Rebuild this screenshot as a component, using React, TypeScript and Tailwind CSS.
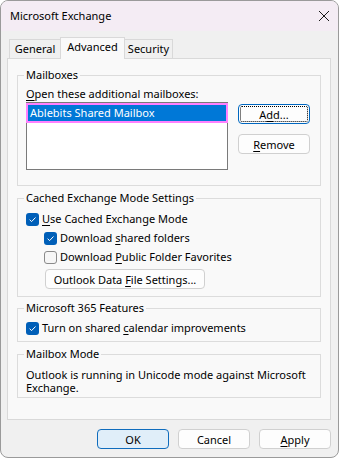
import React from 'react';

function U({ children }: { children: React.ReactNode }) {
	return <span className="underline decoration-1 underline-offset-2">{children}</span>;
}

function Check({ checked }: { checked: boolean }) {
	if (!checked) {
		return <span className="h-[13px] w-[13px] shrink-0 rounded-[3px] border border-[#8a8a8a] bg-[#f6f6f6]" />;
	}
	return (
		<span className="flex h-[13px] w-[13px] shrink-0 items-center justify-center rounded-[3px] bg-[#005fb8]">
			<svg width="9" height="9" viewBox="0 0 9 9">
				<path d="M1.6 4.7 L3.6 6.6 L7.5 2.5" fill="none" stroke="white" strokeWidth="1" />
			</svg>
		</span>
	);
}

interface GroupProps {
	title: string;
	className: string;
	children: React.ReactNode;
}
function Group({ title, className, children }: GroupProps) {
	return (
		<fieldset className={'border border-[#dcdcdc] ' + className}>
			<legend className="-ml-[2px] px-[2px] leading-[16px]">{title}</legend>
			{children}
		</fieldset>
	);
}

function Btn({
	children,
	className = '',
}: {
	children: React.ReactNode;
	className?: string;
}) {
	return (
		<button
			className={
				'flex h-[20px] w-[72px] items-center justify-center rounded-[4px] border leading-none ' +
				className
			}
		>
			<span>{children}</span>
		</button>
	);
}

export default function App() {
	return (
		<div className="h-[459px] w-[340px] bg-white font-['Noto_Sans',sans-serif] text-[11px] text-black">
			<div className="flex h-[458px] w-[339px] flex-col overflow-hidden rounded-[8px] border border-[#9a9a9a] bg-[#f0f0f0]">
				{/* title bar */}
				<div className="flex h-[30px] shrink-0 items-center justify-between bg-[#f4ecf4] pl-[9px] pr-[8px]">
					<span>Microsoft Exchange</span>
					<svg width="12" height="12" viewBox="0 0 12 12">
						<path d="M1 1 L11 11 M11 1 L1 11" stroke="#1a1a1a" strokeWidth="1" />
					</svg>
				</div>

				<div className="flex flex-col pl-[6px] pr-[7px]">
					{/* tabs */}
					<div className="mt-[6px] flex h-[21px] items-end pl-[2px]">
						<div className="flex h-[19px] w-[52px] items-center justify-center border border-b-0 border-[#d9d9d9] pt-[1px]">
							General
						</div>
						<div className="relative z-10 -mb-px -ml-px flex h-[22px] w-[65px] items-center justify-center border border-b-0 border-[#d9d9d9] bg-[#f9f9f9] pb-[2px]">
							Advanced
						</div>
						<div className="-ml-px flex h-[19px] w-[49px] items-center justify-center border border-b-0 border-[#d9d9d9] pt-[1px]">
							Security
						</div>
					</div>

					{/* tab panel */}
					<div className="flex flex-col border border-[#d9d9d9] bg-[#f9f9f9] px-[9px] pb-[21px] pt-[8px]">
						<Group title="Mailboxes" className="pb-[15px] pl-[8px] pr-[10px] pt-[3px]">
							<div className="leading-[15px]">
								<U>O</U>pen these additional mailboxes:
							</div>
							<div className="mt-[1px] flex">
								<div className="h-[68px] w-[202px] border border-[#7a7a7a] bg-white">
									<div className="-mx-px flex h-[20px] items-center border-2 border-[#ff80ff] bg-[#0078d7] pl-[2px] text-white">
										Ablebits Shared Mailbox
									</div>
								</div>
								<div className="ml-[10px] flex flex-col gap-[10px] pt-[2px]">
									<Btn className="border-[#0067c0] bg-[#fdfdfd] outline-1 outline-offset-[-3px] outline-black outline-dotted">
										A<U>d</U>d...
									</Btn>
									<Btn className="border-[#d0d0d0] bg-[#fdfdfd]">
										<U>R</U>emove
									</Btn>
								</div>
							</div>
						</Group>

						<Group title="Cached Exchange Mode Settings" className="mt-[4px] pb-[7px] pl-[8px] pr-[10px] pt-[4px]">
							<div className="flex h-[19px] items-center gap-[3px]">
								<Check checked />
								<span>
									<U>U</U>se Cached Exchange Mode
								</span>
							</div>
							<div className="flex h-[19px] items-center gap-[3px] pl-[18px]">
								<Check checked />
								<span>
									Download <U>s</U>hared folders
								</span>
							</div>
							<div className="flex h-[19px] items-center gap-[3px] pl-[18px]">
								<Check checked={false} />
								<span>
									Download <U>P</U>ublic Folder Favorites
								</span>
							</div>
							<div className="ml-[19px] mt-[2px]">
								<Btn className="w-[160px] border-[#d0d0d0] bg-[#fdfdfd]">
									Outlook Data <U>F</U>ile Settings...
								</Btn>
							</div>
						</Group>

						<Group title="Microsoft 365 Features" className="mt-[3px] pb-[3px] pl-[8px] pr-[10px] pt-[3px]">
							<div className="flex h-[19px] items-center gap-[3px]">
								<Check checked />
								<span>
									Turn on shared <U>c</U>alendar improvements
								</span>
							</div>
						</Group>

						<Group title="Mailbox Mode" className="mt-[4px] pb-[3px] pl-[8px] pr-[6px] pt-[6px]">
							<p className="leading-[13px]">
								Outlook is running in Unicode mode against Microsoft Exchange.
							</p>
						</Group>
					</div>

					{/* dialog buttons */}
					<div className="mt-[9px] flex justify-end gap-[9px]">
						<Btn className="border-[#0f6cbd] bg-[#e0eef9]">OK</Btn>
						<Btn className="border-[#d0d0d0] bg-[#fdfdfd]">Cancel</Btn>
						<Btn className="border-[#d0d0d0] bg-[#fdfdfd]">
							<U>A</U>pply
						</Btn>
					</div>
				</div>
			</div>
		</div>
	);
}
